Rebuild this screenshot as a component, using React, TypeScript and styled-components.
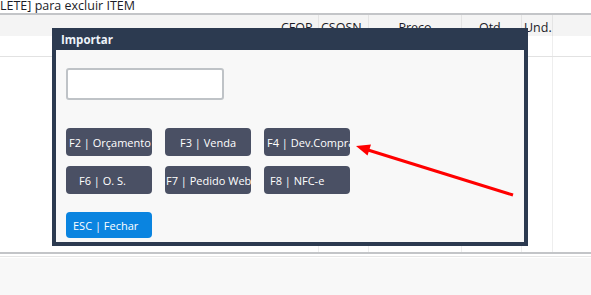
import React from "react";
import styled, { createGlobalStyle } from "styled-components";

const GlobalStyle = createGlobalStyle`
  html, body {
    margin: 0;
    padding: 0;
    background: #ffffff;
    font-family: "Open Sans", "Noto Sans", sans-serif;
    overflow: hidden;
  }
`;

const Page = styled.div`
  position: relative;
  width: 591px;
  height: 295px;
  display: flex;
  flex-direction: column;
`;

const Hint = styled.div`
  height: 13px;
  line-height: 12px;
  font-size: 12.5px;
  color: #1c1c28;
  white-space: nowrap;
  border-bottom: 2px solid #c3c5c8;
`;

const COLS = "279px 40px 50px 93px 60px 31px 1fr";

const Table = styled.div`
  height: 237px;
  display: flex;
  flex-direction: column;
`;

const HeaderRow = styled.div`
  display: grid;
  grid-template-columns: ${COLS};
  height: 21px;
  background: #f4f4f4;
`;

const HeadCell = styled.div<{ $align?: string }>`
  display: flex;
  align-items: center;
  justify-content: ${(p) => p.$align || "flex-start"};
  padding-left: ${(p) => (p.$align === "center" ? "0" : "2px")};
  padding-top: 4px;
  font-size: 12.5px;
  color: #1c1c28;
  border-right: 1px solid #e4e4e4;
  overflow: hidden;
  white-space: nowrap;
  &:first-child, &:last-child {
    border-right: none;
  }
`;

const BodyRow = styled.div<{ $grow?: boolean }>`
  display: grid;
  grid-template-columns: ${COLS};
  height: ${(p) => (p.$grow ? "auto" : "20px")};
  flex: ${(p) => (p.$grow ? 1 : "none")};
  border-bottom: ${(p) => (p.$grow ? "none" : "1px solid #e2e2e2")};
`;

const BodyCell = styled.div`
  border-right: 1px solid #eeeeee;
  &:first-child, &:last-child {
    border-right: none;
  }
`;

const Footer = styled.div`
  flex: 1;
  border-top: 2px solid #c3c5c8;
  display: flex;
  flex-direction: column;
`;

const FooterLine = styled.div`
  margin-top: 2px;
  height: 1px;
  background: #e6e6e6;
`;

const FooterBody = styled.div`
  flex: 1;
  margin-top: 1px;
  background: #f8f8f8;
`;

const Modal = styled.div`
  position: absolute;
  left: 52px;
  top: 28px;
  width: 476px;
  height: 218px;
  box-sizing: border-box;
  background: #2c3a50;
  padding: 0 4px 4px;
  display: flex;
  flex-direction: column;
`;

const ModalTitle = styled.div`
  height: 22px;
  display: flex;
  align-items: center;
  padding-left: 5px;
  font-size: 11.5px;
  font-weight: 700;
  color: #eef3fa;
`;

const ModalBody = styled.div`
  flex: 1;
  background: #f8f8f8;
  padding: 18px 10px 0;
  display: flex;
  flex-direction: column;
`;

const SearchInput = styled.input`
  width: 158px;
  height: 32px;
  box-sizing: border-box;
  border: 2px solid #bfc3c7;
  border-radius: 3px;
  background: #ffffff;
  outline: none;
`;

const ButtonGrid = styled.div`
  margin-top: 28px;
  display: grid;
  grid-template-columns: repeat(3, 86px);
  column-gap: 13px;
  row-gap: 10px;
`;

const ActionButton = styled.button<{ $pad?: number; $blue?: boolean }>`
  height: ${(p) => (p.$blue ? "26px" : "28px")};
  width: 86px;
  border: none;
  border-radius: 4px;
  background: ${(p) => (p.$blue ? "#0a84e0" : "#4a5064")};
  color: #ffffff;
  font-family: "Open Sans", "Noto Sans", sans-serif;
  font-size: 11px;
  white-space: nowrap;
  overflow: hidden;
  text-align: ${(p) => (p.$pad === undefined ? "center" : "left")};
  padding: 0 0 0 ${(p) => (p.$pad === undefined ? 0 : p.$pad)}px;
`;

const EscRow = styled.div`
  margin-top: 18px;
`;

const Arrow = styled.svg`
  position: absolute;
  left: 0;
  top: 0;
  pointer-events: none;
`;

const headers: { label: string; align?: string }[] = [
  { label: "" },
  { label: "CFOP" },
  { label: "CSOSN" },
  { label: "Preco", align: "center" },
  { label: "Qtd.", align: "center" },
  { label: "Und." },
  { label: "" },
];

const buttons: { label: string; pad?: number }[] = [
  { label: "F2 | Orçamento", pad: 3 },
  { label: "F3 | Venda" },
  { label: "F4 | Dev.Compra", pad: 3 },
  { label: "F6 | O. S.", pad: 13 },
  { label: "F7 | Pedido Web", pad: 1 },
  { label: "F8 | NFC-e", pad: 6 },
];

const App: React.FC = () => {
  return (
    <Page>
      <GlobalStyle />
      <Hint>LETE] para excluir ITEM</Hint>
      <Table>
        <HeaderRow>
          {headers.map((h, i) => (
            <HeadCell key={i} $align={h.align}>
              {h.label}
            </HeadCell>
          ))}
        </HeaderRow>
        <BodyRow>
          {headers.map((_, i) => (
            <BodyCell key={i} />
          ))}
        </BodyRow>
        <BodyRow $grow>
          {headers.map((_, i) => (
            <BodyCell key={i} />
          ))}
        </BodyRow>
      </Table>
      <Footer>
        <FooterLine />
        <FooterBody />
      </Footer>

      <Modal>
        <ModalTitle>Importar</ModalTitle>
        <ModalBody>
          <SearchInput />
          <ButtonGrid>
            {buttons.map((b) => (
              <ActionButton key={b.label} $pad={b.pad}>
                {b.label}
              </ActionButton>
            ))}
          </ButtonGrid>
          <EscRow>
            <ActionButton $blue $pad={7}>
              ESC | Fechar
            </ActionButton>
          </EscRow>
        </ModalBody>
      </Modal>

      <Arrow width="591" height="295" viewBox="0 0 591 295">
        <line x1="513" y1="195" x2="368" y2="150" stroke="#ff0000" strokeWidth="3" />
        <polygon points="356,146 371,144.5 367.5,155.5" fill="#ff0000" />
      </Arrow>
    </Page>
  );
};

export default App;
